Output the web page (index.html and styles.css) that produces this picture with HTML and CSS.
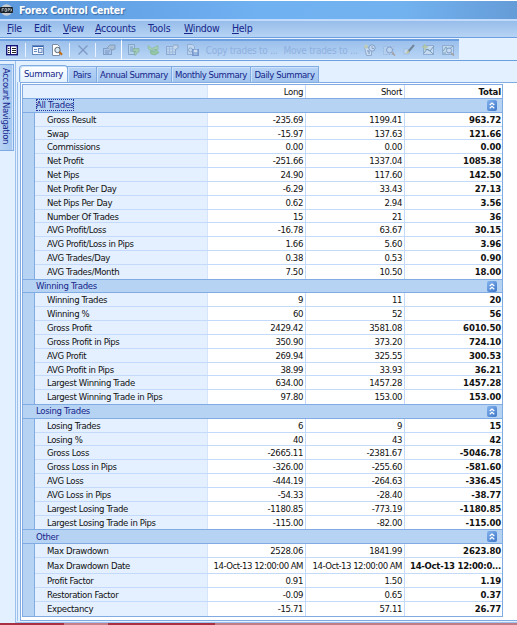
FILE: index.html
```html
<!DOCTYPE html>
<html lang="en">
<head>
    <meta charset="UTF-8">
    <title>Forex Control Center</title>
    <link rel="stylesheet" href="styles.css">
</head>
<body>
    <div class="titlebar">
        <svg class="logo" width="14" height="12" viewBox="0 0 14 12"><ellipse cx="6.500" cy="6" rx="6" ry="5.800" fill="#c8cdd2"/><rect y="3" width="13" height="6" rx="1" fill="#182027"/><path d="M2 7.500V4.500h2M2 6h1.500M5 4.500h1.500v3H5zM8 7.500v-3h1.500v1.500H8M10.500 4.500l1.500 3M12 4.500l-1.500 3" fill="none" stroke="#c5cbd0" stroke-width=".7"/></svg>
        <span class="title">Forex Control Center</span>
    </div>

    <div class="menu">
        <span class="m-file"><u>F</u>ile</span>
        <span class="m-edit">Edit</span>
        <span class="m-view"><u>V</u>iew</span>
        <span class="m-accounts"><u>A</u>ccounts</span>
        <span class="m-tools">Tools</span>
        <span class="m-window"><u>W</u>indow</span>
        <span class="m-help"><u>H</u>elp</span>
    </div>

    <div class="toolbars">
        <div class="toolbar main-tools">
            <svg width="12" height="12" viewBox="0 0 12 12"><rect x=".7" y="1.700" width="10.600" height="9" fill="#fff" stroke="#17177a" stroke-width="1.400"/><path d="M4.500 2v9" stroke="#17177a"/><path d="M2 4.500h1.500M2 6.500h1.500M2 8.500h1.500M6 4.500h4M6 6.500h4M6 8.500h4" stroke="#222"/></svg>
            <i class="sep"></i>
            <svg width="12" height="12" viewBox="0 0 12 12"><rect x=".5" y="1.500" width="11" height="9" fill="#f4f7ff" stroke="#6788bd"/><path d="M1 2.500h10" stroke="#3465b5"/><path d="M2 5.500h3M2 7.500h3" stroke="#658abd"/><rect x="6.500" y="4.500" width="3.500" height="4" fill="#dfe9fa" stroke="#6788bd"/></svg>
            <svg width="12" height="12" viewBox="0 0 12 12"><path d="M1.500.5h5l2 2v9h-7z" fill="#fff" stroke="#7b8ca8"/><circle cx="6.500" cy="6" r="2.700" fill="#dceaf6" stroke="#59656f"/><path d="M8.500 8l2.500 2.700" stroke="#c26b16" stroke-width="2"/></svg>
            <i class="sep"></i>
            <svg width="12" height="12" viewBox="0 0 12 12"><path d="M1.500 1.500l9 9M10.500 1.500l-9 9" stroke="#7d98c4" stroke-width="1.300"/></svg>
            <i class="sep"></i>
            <svg width="13" height="12" viewBox="0 0 13 12"><rect x=".5" y="4.500" width="8" height="6" fill="#a9c4e8" stroke="#819fc9"/><path d="M2 7h5M2 9h4" stroke="#7895c2"/><path d="M4 4l3-3h5v4l-3 1-2-1" fill="#a8bfd6" stroke="#829dbd"/></svg>
        </div>
        <div class="toolbar trade-tools">
            <svg width="13" height="12" viewBox="0 0 13 12"><path d="M1.500.5h6v10h-6z" fill="#b5d0e9" stroke="#83a5cb"/><path d="M3 3h3M3 5h3M3 7h3" stroke="#739bc4"/><path d="M6 4.500h6v3l-4 4-1-3 2-1H6z" fill="#9fc9b5" stroke="#82ad9d" stroke-width=".7"/></svg>
            <svg width="13" height="12" viewBox="0 0 13 12"><path d="M1 1.500l4 3 6-3v4H7l-3 1-3-2z" fill="#a6d0b4" stroke="#89b89d" stroke-width=".7"/><path d="M3 7h5l1-1.500 3 3L8 11l-4-1z" fill="#94c7a5" stroke="#80b39a" stroke-width=".7"/></svg>
            <svg width="13" height="12" viewBox="0 0 13 12"><rect x=".5" y="2.500" width="9" height="8" fill="#bdd4ef" stroke="#8ba9d3"/><path d="M1 5h8M3.500 3v7M6.500 3v7M1 8h8" stroke="#93b1d9" stroke-width=".7"/><path d="M7 1h5v3l-3 2" fill="#c5d7ea" stroke="#8aa5ca"/></svg>
            <svg width="13" height="12" viewBox="0 0 13 12"><path d="M1.500.5h5l2 2v8h-7z" fill="#bfd5f0" stroke="#90add5"/><circle cx="4.500" cy="6" r="2" fill="none" stroke="#8daad1"/><rect x="6.500" y="5.500" width="6" height="6" fill="#84a5d6" stroke="#7898cd"/><path d="M8 6h3v2H8zM8 10h3" fill="#d1e0f3" stroke="#d1e0f3" stroke-width=".6"/></svg>
            <span class="copy">Copy trades to ...</span>
            <span class="move">Move trades to ...</span>
            <svg width="13" height="12" viewBox="0 0 13 12"><path d="M1.500 3.500h7v8h-5z" fill="#c8daef" stroke="#91abd0"/><circle cx="9" cy="4" r="3.200" fill="#c5daf0" stroke="#819fc8"/><path d="M9 2v2.500h2" fill="none" stroke="#7b98bf" stroke-width=".8"/><circle cx="3" cy="2.500" r="2" fill="#bdcbb9"/><path d="M4 7h2v3" fill="none" stroke="#7896bf"/></svg>
            <svg width="13" height="12" viewBox="0 0 13 12"><rect x=".5" y="2.500" width="10" height="8" fill="#b5cfef" stroke="#9ab7df" stroke-dasharray="2 1"/><circle cx="6.500" cy="6" r="3" fill="#bcd4f0" stroke="#809ec9"/><path d="M9 8.500l3 3" stroke="#a59f9b" stroke-width="1.500"/></svg>
            <svg width="13" height="12" viewBox="0 0 13 12"><path d="M1 5h5v5H1z" fill="#c3d8ef" stroke="#9ab5d9" stroke-width=".7"/><path d="M5 8l6-7" stroke="#718799" stroke-width="2"/><path d="M3 9l2.500-2.500 1 1.500L3 10z" fill="#c7c68f"/></svg>
            <svg width="13" height="12" viewBox="0 0 13 12"><rect x="1.500" y="1.500" width="10" height="9" fill="#c5daf0" stroke="#8fadd4"/><path d="M2 9l3-4 3 2 4-5M3 5l4 1 4 4" fill="none" stroke="#779cb7"/><path d="M3 0v6M0 3h6" stroke="#b4c7a7" stroke-width="1.500"/></svg>
            <svg width="13" height="12" viewBox="0 0 13 12"><rect x=".5" y="1.500" width="11" height="9" fill="#bfd6ef" stroke="#8fadd4"/><path d="M1 7l3-4 2 3 5-4M1 9h3" fill="none" stroke="#7da4b4"/><circle cx="7" cy="6.500" r="2.500" fill="#c8dcf1" stroke="#7d9cc7"/><path d="M9 9l3 2.500" stroke="#a49f9d" stroke-width="1.500"/></svg>
        </div>
    </div>

    <div class="workspace">
        <div class="sidebar"><div class="side-tab">Account Navigation</div></div>
        <div class="panel">
            <div class="tabs">
                <div class="tab active">Summary</div>
                <div class="tab t-pairs">Pairs</div>
                <div class="tab t-annual">Annual Summary</div>
                <div class="tab t-monthly">Monthly Summary</div>
                <div class="tab t-daily">Daily Summary</div>
            </div>
            <div class="frame">
                <div class="grid">
                    <div class="row head"><span></span><b>Long</b><b>Short</b><b>Total</b></div>

                    <div class="group"><span class="focused">All Trades</span><svg class="collapse" viewBox="0 0 10 11"><path d="M2.700 5L5 3l2.300 2M2.700 8.300L5 6.300l2.300 2"/></svg></div>
                    <div class="rows">
                        <div class="row"><span>Gross Result</span><b>-235.69</b><b>1199.41</b><b>963.72</b></div>
                        <div class="row"><span>Swap</span><b>-15.97</b><b>137.63</b><b>121.66</b></div>
                        <div class="row"><span>Commissions</span><b>0.00</b><b>0.00</b><b>0.00</b></div>
                        <div class="row"><span>Net Profit</span><b>-251.66</b><b>1337.04</b><b>1085.38</b></div>
                        <div class="row"><span>Net Pips</span><b>24.90</b><b>117.60</b><b>142.50</b></div>
                        <div class="row"><span>Net Profit Per Day</span><b>-6.29</b><b>33.43</b><b>27.13</b></div>
                        <div class="row"><span>Net Pips Per Day</span><b>0.62</b><b>2.94</b><b>3.56</b></div>
                        <div class="row"><span>Number Of Trades</span><b>15</b><b>21</b><b>36</b></div>
                        <div class="row"><span>AVG Profit/Loss</span><b>-16.78</b><b>63.67</b><b>30.15</b></div>
                        <div class="row"><span>AVG Profit/Loss in Pips</span><b>1.66</b><b>5.60</b><b>3.96</b></div>
                        <div class="row"><span>AVG Trades/Day</span><b>0.38</b><b>0.53</b><b>0.90</b></div>
                        <div class="row"><span>AVG Trades/Month</span><b>7.50</b><b>10.50</b><b>18.00</b></div>
                    </div>

                    <div class="group"><span>Winning Trades</span><svg class="collapse" viewBox="0 0 10 11"><path d="M2.700 5L5 3l2.300 2M2.700 8.300L5 6.300l2.300 2"/></svg></div>
                    <div class="rows">
                        <div class="row"><span>Winning Trades</span><b>9</b><b>11</b><b>20</b></div>
                        <div class="row"><span>Winning %</span><b>60</b><b>52</b><b>56</b></div>
                        <div class="row"><span>Gross Profit</span><b>2429.42</b><b>3581.08</b><b>6010.50</b></div>
                        <div class="row"><span>Gross Profit in Pips</span><b>350.90</b><b>373.20</b><b>724.10</b></div>
                        <div class="row"><span>AVG Profit</span><b>269.94</b><b>325.55</b><b>300.53</b></div>
                        <div class="row"><span>AVG Profit in Pips</span><b>38.99</b><b>33.93</b><b>36.21</b></div>
                        <div class="row"><span>Largest Winning Trade</span><b>634.00</b><b>1457.28</b><b>1457.28</b></div>
                        <div class="row"><span>Largest Winning Trade in Pips</span><b>97.80</b><b>153.00</b><b>153.00</b></div>
                    </div>

                    <div class="group"><span>Losing Trades</span><svg class="collapse" viewBox="0 0 10 11"><path d="M2.700 5L5 3l2.300 2M2.700 8.300L5 6.300l2.300 2"/></svg></div>
                    <div class="rows">
                        <div class="row"><span>Losing Trades</span><b>6</b><b>9</b><b>15</b></div>
                        <div class="row"><span>Losing %</span><b>40</b><b>43</b><b>42</b></div>
                        <div class="row"><span>Gross Loss</span><b>-2665.11</b><b>-2381.67</b><b>-5046.78</b></div>
                        <div class="row"><span>Gross Loss in Pips</span><b>-326.00</b><b>-255.60</b><b>-581.60</b></div>
                        <div class="row"><span>AVG Loss</span><b>-444.19</b><b>-264.63</b><b>-336.45</b></div>
                        <div class="row"><span>AVG Loss in Pips</span><b>-54.33</b><b>-28.40</b><b>-38.77</b></div>
                        <div class="row"><span>Largest Losing Trade</span><b>-1180.85</b><b>-773.19</b><b>-1180.85</b></div>
                        <div class="row"><span>Largest Losing Trade in Pips</span><b>-115.00</b><b>-82.00</b><b>-115.00</b></div>
                    </div>

                    <div class="group"><span>Other</span><svg class="collapse" viewBox="0 0 10 11"><path d="M2.700 5L5 3l2.300 2M2.700 8.300L5 6.300l2.300 2"/></svg></div>
                    <div class="rows">
                        <div class="row"><span>Max Drawdown</span><b>2528.06</b><b>1841.99</b><b>2623.80</b></div>
                        <div class="row date"><span>Max Drawdown Date</span><b>14-Oct-13 12:00:00 AM</b><b>14-Oct-13 12:00:00 AM</b><b>14-Oct-13 12:00:0...</b></div>
                        <div class="row"><span>Profit Factor</span><b>0.91</b><b>1.50</b><b>1.19</b></div>
                        <div class="row"><span>Restoration Factor</span><b>-0.09</b><b>0.65</b><b>0.37</b></div>
                        <div class="row"><span>Expectancy</span><b>-15.71</b><b>57.11</b><b>26.77</b></div>
                    </div>
                </div>
            </div>
        </div>
    </div>
    <div class="bottom-edge"></div>
</body>
</html>
```

FILE: styles.css
```css
* {
    box-sizing: border-box;
}

body {
    margin: 0;
    width: 517px;
    height: 625px;
    overflow: hidden;
    display: flex;
    flex-direction: column;
    font-family: "DejaVu Sans Condensed", "DejaVu Sans", sans-serif;
    font-size: 9.5px;
    background: #e2f0ff;
    color: #111;
    white-space: nowrap;
}

svg {
    display: block;
    flex: none;
}

.titlebar {
    height: 19px;
    border-top: 1px solid #fff;
    display: flex;
    align-items: center;
    gap: 5px;
    background: linear-gradient(90deg, #5b98dc, #70b1f2 50%, #72b2ef 78%, #659cd8);
}

.title {
    color: #fff;
    font-weight: bold;
    font-size: 10.5px;
    letter-spacing: -0.28px;
    text-shadow: 1px 1px 1px #386ba7;
}

.menu {
    height: 19px;
    border-top: 2px solid #c2dafb;
    border-bottom: 1px solid #6c9fe0;
    background: linear-gradient(#97bdea, #b6d3f4);
    display: flex;
    align-items: center;
    padding: 0 0 2px 7px;
    font-size: 10.5px;
    color: #15258a;
}

.menu span {
    flex: none;
}

.menu u {
    text-underline-offset: 1px;
}

.m-file { width: 27px; letter-spacing: -0.2px; }
.m-edit { width: 29px; letter-spacing: -0.3px; }
.m-view { width: 32px; letter-spacing: -0.4px; }
.m-accounts { width: 53px; letter-spacing: -0.3px; }
.m-tools { width: 36px; letter-spacing: -0.1px; }
.m-window { width: 48px; letter-spacing: -0.3px; }
.m-help { letter-spacing: -0.3px; }

.toolbars {
    height: 23px;
    border-top: 1px solid #e8f3ff;
    border-bottom: 1px solid #6c9fe0;
    display: flex;
}

.toolbar {
    height: 21px;
    border-top: 2px solid #6c9fe0;
    display: flex;
    align-items: center;
    background: linear-gradient(#9bc0ec, #b9d5f5);
    border-bottom: 1px solid #e8f3ff;
    flex: none;
}

.main-tools {
    width: 121px;
    padding-left: 6px;
    gap: 6.5px;
}

.sep {
    width: 1px;
    height: 14px;
    background: #e8f3ff;
    flex: none;
}

.trade-tools {
    width: 338px;
    border-left: 1px solid #fff;
    padding-left: 5px;
    gap: 6.7px;
    color: #8fb0e0;
    font-size: 10px;
}

.copy {
    width: 71px;
    letter-spacing: -0.33px;
}

.move {
    width: 73px;
    letter-spacing: -0.25px;
}

.workspace {
    flex: 1;
    display: flex;
    min-height: 0;
}

.sidebar {
    width: 15px;
    padding-top: 3px;
}

.side-tab {
    width: 14px;
    height: 87px;
    border: 1px solid #7daae2;
    border-left: none;
    background: linear-gradient(90deg, #b7d3f5, #a5c7ef);
    box-shadow: inset -1px 0 #d1e4fb;
    writing-mode: vertical-rl;
    color: #16278e;
    font-size: 9.5px;
    line-height: 13px;
    letter-spacing: -0.4px;
    padding-top: 3px;
}

.panel {
    flex: 1;
    border-left: 1px solid #9dc0ec;
    border-bottom: 1px solid #9dc0ec;
    padding: 2px 0 1px 2px;
    display: flex;
    flex-direction: column;
}

.tabs {
    height: 19px;
    display: flex;
    align-items: flex-end;
    padding-left: 1px;
}

.tab {
    height: 16px;
    border: 1px solid #80abe3;
    border-bottom: none;
    background: linear-gradient(#b8d4f6, #a1c4ee);
    box-shadow: inset 1px 1px #cde2fb;
    color: #15258a;
    text-align: center;
    line-height: 15px;
    margin-left: -1px;
    flex: none;
    letter-spacing: -0.42px;
}

.tab.active {
    width: 49px;
    height: 17px;
    background: linear-gradient(#fff, #e4f1ff);
    border-radius: 4px 4px 0 0;
    margin-left: 0;
    letter-spacing: -0.3px;
}

.t-pairs { width: 30px; }
.t-annual { width: 76px; }
.t-monthly { width: 80px; }
.t-daily { width: 69px; }

.frame {
    flex: 1;
    border: 1px solid #80abe3;
    border-right: none;
    box-shadow: -2px 0 #e2f0ff, -3px 0 #9dc0ec;
    background: #fff;
    padding: 1px 0 0 1px;
    margin-left: 2px;
}

.grid {
    width: 481px;
    border: 1px solid #80abe3;
    background: #b7d3f4;
}

.rows {
    margin-left: 11px;
    border-left: 1px solid #80abe3;
}

.row {
    height: 13.84px;
    display: grid;
    grid-template-columns: 173px 98px 99px 1fr;
    grid-template-rows: minmax(0, 1fr);
    border-bottom: 1px solid #c3dafa;
    background: #fff;
    line-height: 13.5px;
}

.row:last-child {
    border-bottom: none;
}

.row span {
    background: #e4f0ff;
    padding-left: 12px;
    letter-spacing: -0.35px;
    border-right: 1px solid #d5e6fc;
}

.row b {
    font-weight: normal;
    text-align: right;
    padding-right: 2px;
    border-right: 1px solid #c3dafa;
    letter-spacing: -0.38px;
}

.row b:last-child {
    font-weight: bold;
    padding-right: 1px;
    border-right: none;
    letter-spacing: -0.15px;
}

.row.head {
    height: 13px;
    grid-template-columns: 185px 98px 99px 1fr;
    border-bottom: none;
}

.row.date {
    height: 16.4px;
    line-height: 16px;
}

.row.date b {
    letter-spacing: -0.5px;
}

.row.date b:last-child {
    letter-spacing: -0.28px;
}

.group {
    height: 14.75px;
    border-top: 1px solid #80abe3;
    border-bottom: 1px solid #80abe3;
    display: flex;
    align-items: center;
    justify-content: space-between;
    padding: 0 5px 0 13px;
    color: #15258a;
    letter-spacing: -0.3px;
    line-height: 12px;
}

.focused {
    outline: 1px dotted #24369a;
    outline-offset: -1px;
}

.collapse {
    width: 10px;
    height: 11px;
    border-radius: 2px;
    background: linear-gradient(135deg, #83b3ef, #3e76c7);
}

.collapse path {
    fill: none;
    stroke: #fff;
    stroke-width: 1.2;
}

.bottom-edge {
    height: 2px;
    background: linear-gradient(90deg, #a93040 64px, #c77f8a 64px 108px, #a93040 108px 215px, #c07b85 215px);
}
```
